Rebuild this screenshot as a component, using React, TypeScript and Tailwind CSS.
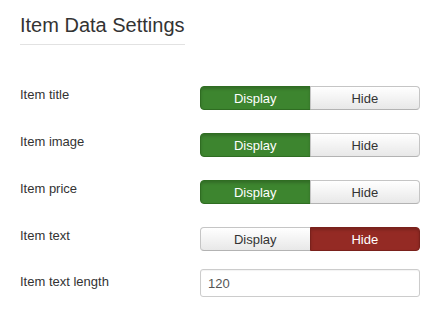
import React, { useState } from 'react';

type Choice = 'show' | 'hide';

const rows: { label: string; value: Choice }[] = [
  { label: 'Item title', value: 'show' },
  { label: 'Item image', value: 'show' },
  { label: 'Item price', value: 'show' },
  { label: 'Item text', value: 'hide' },
];

function YesNo({ initial }: { initial: Choice }) {
  const [value, setValue] = useState<Choice>(initial);

  return (
    <div className="flex w-[220px] h-6 text-[13px] leading-none">
      <button
        type="button"
        onClick={() => setValue('show')}
        className={
          value === 'show'
            ? 'flex-1 rounded-l-[4px] border border-[#2f6d22] bg-[#3d852f] text-white shadow-[inset_0_2px_3px_rgba(0,0,0,0.18)]'
            : 'flex-1 rounded-l-[4px] border border-[#c5c5c5] border-b-[#b3b3b3] bg-gradient-to-b from-white to-[#e8e8e8] text-[#333]'
        }
      >
        Display
      </button>
      <button
        type="button"
        onClick={() => setValue('hide')}
        className={
          value === 'hide'
            ? 'flex-1 -ml-px rounded-r-[4px] border border-[#7a211c] bg-[#942a24] text-white shadow-[inset_0_2px_3px_rgba(0,0,0,0.18)]'
            : 'flex-1 -ml-px rounded-r-[4px] border border-[#c5c5c5] border-b-[#b3b3b3] bg-gradient-to-b from-white to-[#e8e8e8] text-[#333]'
        }
      >
        Hide
      </button>
    </div>
  );
}

export default function App() {
  const [length, setLength] = useState('120');

  return (
    <div className="w-[438px] h-[318px] bg-white pl-5 pt-[13px] text-[#333] font-['Liberation_Sans',Arial,sans-serif]">
      <h2 className="inline-block w-[165px] pb-[7px] border-b border-[#e2e2e2] text-[20px] leading-[24px] font-normal">
        Item Data Settings
      </h2>

      <div className="mt-[41px]">
        {rows.map(row => (
          <div key={row.label} className="flex items-start mb-[23px]">
            <label className="w-[180px] text-[13px] leading-[18px]">{row.label}</label>
            <YesNo initial={row.value} />
          </div>
        ))}

        <div className="flex items-start -mt-[5px]">
          <label className="w-[180px] pt-1 text-[13px] leading-[18px]">Item text length</label>
          <input
            type="text"
            value={length}
            onChange={e => setLength(e.target.value)}
            className="w-[220px] h-[28px] px-[7px] border border-[#ccc] rounded-[3px] text-[13px] text-[#555] shadow-[inset_0_1px_1px_rgba(0,0,0,0.05)] outline-none"
          />
        </div>
      </div>
    </div>
  );
}
